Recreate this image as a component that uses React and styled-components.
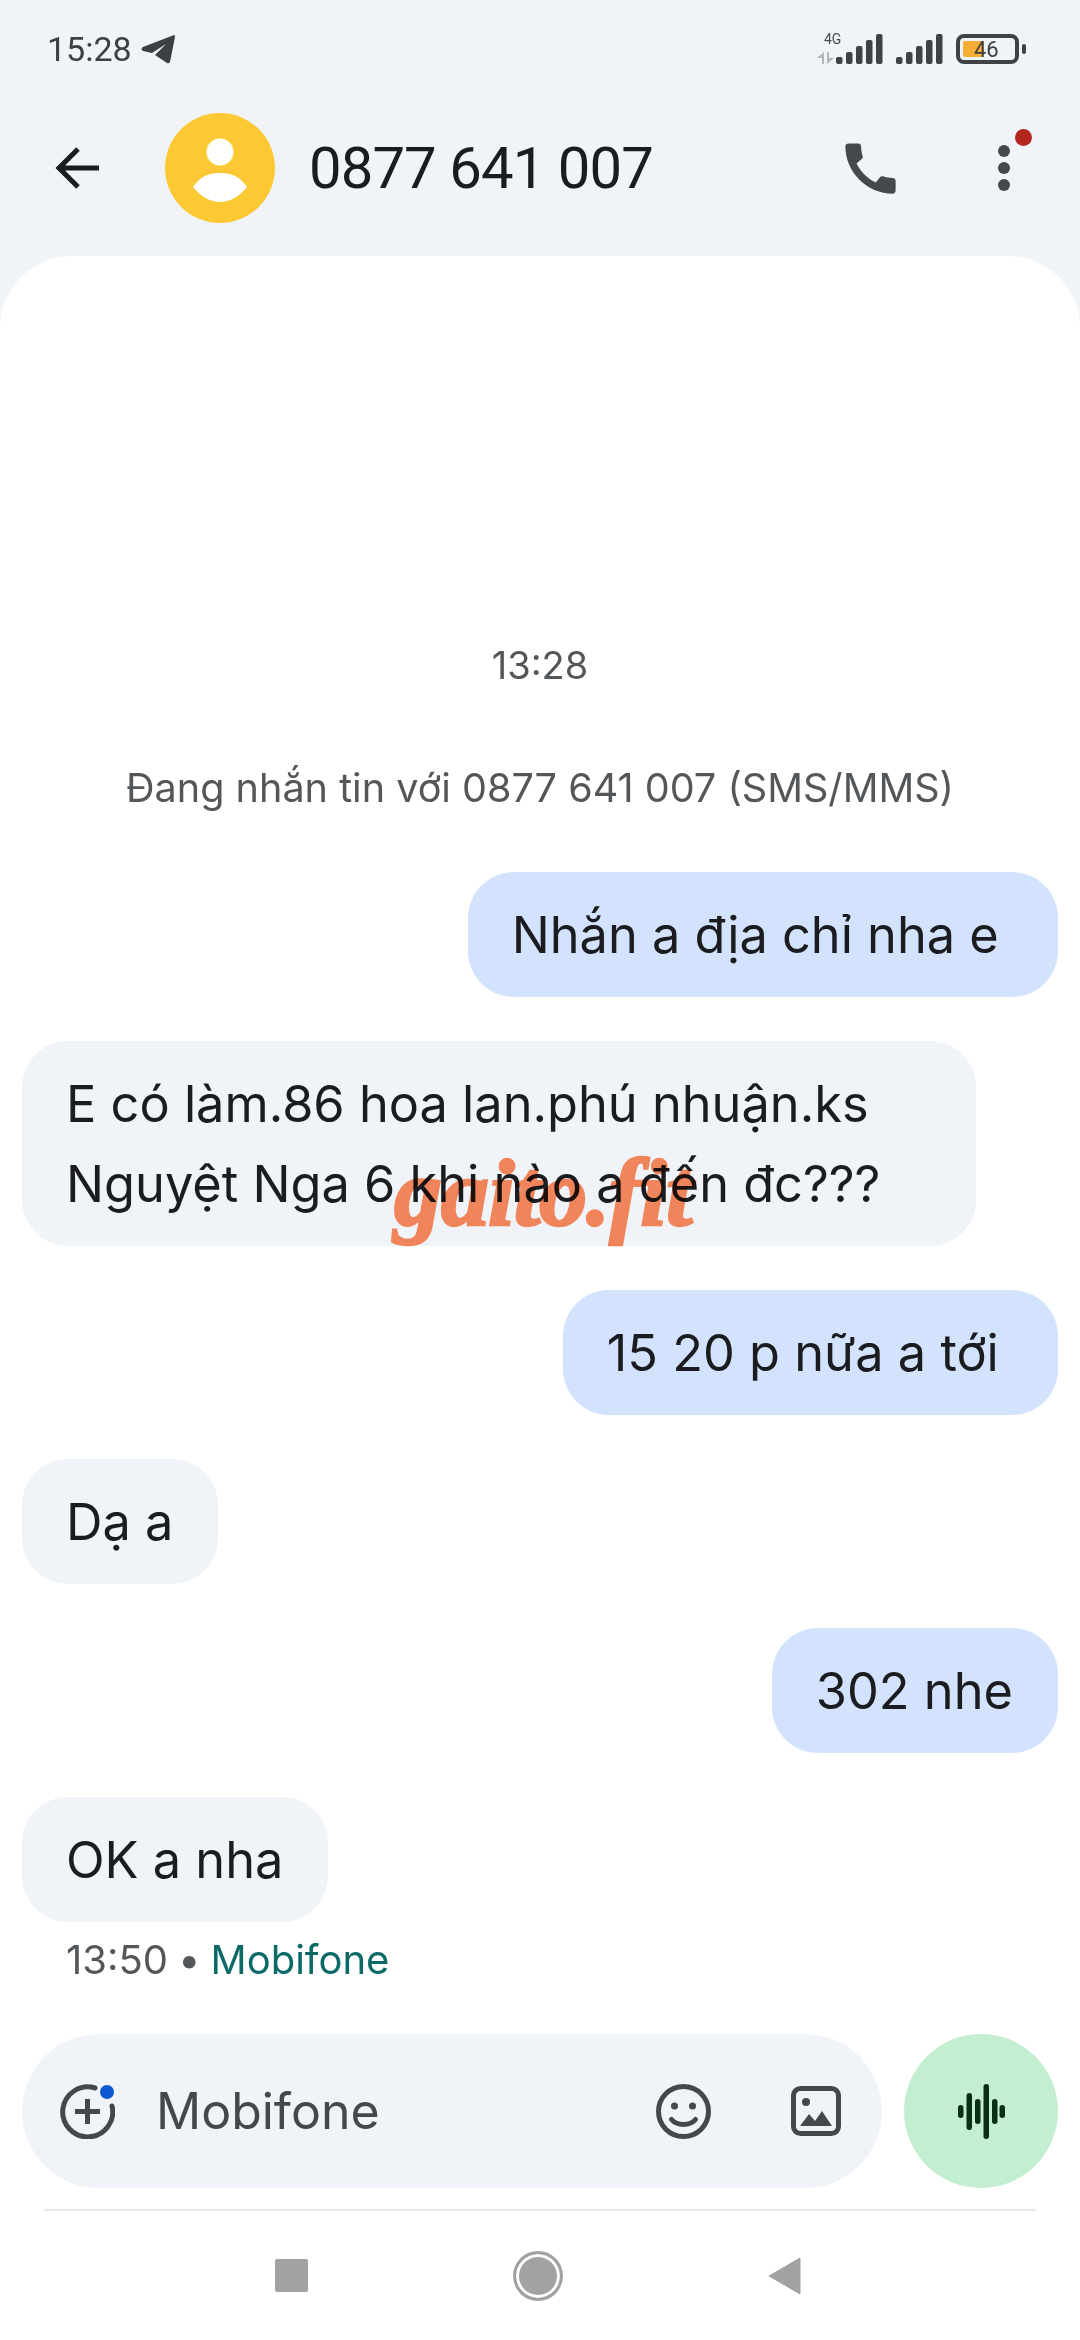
import React from "react";
import styled, { createGlobalStyle } from "styled-components";
import { MdCall } from "react-icons/md";

const GlobalStyle = createGlobalStyle`
  html, body { margin: 0; padding: 0; background: #f0f4f9; }
  * { box-sizing: border-box; }
`;

const Page = styled.div`
  position: relative;
  width: 1080px;
  height: 2340px;
  display: flex;
  flex-direction: column;
  background: #f0f4f9;
  font-family: Inter, "Noto Sans", sans-serif;
  color: #1b1c1f;
  overflow: hidden;
`;

const StatusBar = styled.div`
  height: 98px;
  flex: none;
  padding: 0 55px 0 47px;
  display: flex;
  align-items: center;
  justify-content: space-between;
  font-family: Roboto, sans-serif;
`;

const StatusLeft = styled.div`
  display: flex;
  align-items: center;
  gap: 9px;
  font-size: 34px;
  color: #3c4043;
`;

const StatusRight = styled.div`
  display: flex;
  align-items: center;
  gap: 13px;
`;

const Network = styled.div`
  position: relative;
  width: 66px;
  height: 30px;
  display: flex;
  justify-content: flex-end;
`;

const NetworkLabel = styled.span`
  position: absolute;
  left: 7px;
  top: -3px;
  font-size: 14px;
  color: #4a4d50;
`;

const NetworkArrows = styled.svg`
  position: absolute;
  left: 0;
  bottom: 0;
`;

const Battery = styled.div`
  position: relative;
  width: 63px;
  height: 30px;
  border: 4px solid #3f4245;
  border-radius: 8px;
  margin-right: 6px;
  display: flex;
  align-items: center;
  padding-left: 14px;
  font-size: 22px;
  color: #3c3f42;
  &::before {
    content: "";
    position: absolute;
    left: 3px;
    top: 3px;
    bottom: 3px;
    width: 21px;
    border-radius: 2px;
    background: #f5ad36;
  }
  &::after {
    content: "";
    position: absolute;
    right: -11px;
    top: 6px;
    width: 4px;
    height: 10px;
    border-radius: 2px;
    background: #3f4245;
  }
`;

const BatteryText = styled.span`
  position: relative;
  z-index: 1;
`;

const Header = styled.header`
  height: 140px;
  flex: none;
  margin-bottom: 18px;
  padding: 0 0 0 55px;
  display: flex;
  align-items: center;
`;

const Title = styled.h1`
  flex: 1;
  margin: 0 0 0 34px;
  font-family: Roboto, sans-serif;
  font-size: 58px;
  font-weight: 400;
  letter-spacing: -0.9px;
  color: #1b1c1f;
`;

const Avatar = styled.svg`
  width: 110px;
  height: 110px;
  margin-left: 66px;
  flex: none;
`;

const CallIcon = styled(MdCall)`
  font-size: 67px;
  color: #46494c;
  margin-right: 94px;
`;

const MoreButton = styled.div`
  position: relative;
  width: 12px;
  height: 46px;
  margin-right: 70px;
  display: flex;
  flex-direction: column;
  justify-content: space-between;
  align-items: center;
  &::after {
    content: "";
    position: absolute;
    left: 17px;
    top: -16px;
    width: 17px;
    height: 17px;
    border-radius: 50%;
    background: #b3261e;
  }
`;

const MoreDot = styled.span`
  width: 12px;
  height: 12px;
  border-radius: 50%;
  background: #46494c;
`;

const Sheet = styled.main`
  flex: 1;
  min-height: 0;
  display: flex;
  flex-direction: column;
  background: #fff;
  border-radius: 72px 72px 0 0;
`;

const Thread = styled.div`
  flex: 1;
  min-height: 0;
  display: flex;
  flex-direction: column;
  justify-content: flex-end;
  padding: 0 22px;
`;

const Timestamp = styled.div`
  text-align: center;
  font-size: 38px;
  color: #54575a;
  margin-bottom: 76px;
`;

const Notice = styled.div`
  text-align: center;
  font-size: 39.6px;
  color: #54575a;
  margin-bottom: 60px;
`;

const Bubble = styled.div`
  align-self: ${(p) => (p.$out ? "flex-end" : "flex-start")};
  max-width: 954px;
  background: ${(p) => (p.$out ? "#d3e3fd" : "#f0f4f9")};
  border-radius: 46px;
  padding: 22.5px 45px 22.5px 44px;
  font-size: 50.5px;
  line-height: 80px;
  white-space: pre-wrap;
  color: #1b1c1f;
  & + & {
    margin-top: 44px;
  }
`;

const Meta = styled.div`
  display: flex;
  align-items: center;
  gap: 10px;
  padding-left: 44px;
  margin: 15px 0 51px;
  font-size: 40px;
  line-height: 46px;
  color: #54575a;
`;

const Carrier = styled.span`
  color: #0b6a66;
`;

const ComposerRow = styled.div`
  flex: none;
  display: flex;
  gap: 22px;
  padding: 0 22px;
`;

const Composer = styled.div`
  flex: 1;
  height: 154px;
  display: flex;
  align-items: center;
  padding: 0 41px 0 38px;
  background: #f0f4f9;
  border-radius: 77px;
`;

const ComposerText = styled.span`
  flex: 1;
  margin-left: 41px;
  font-size: 50px;
  color: #45484b;
`;

const ToolIcon = styled.svg`
  width: ${(p) => p.$size || 55}px;
  height: ${(p) => p.$size || 55}px;
  flex: none;
  margin-left: ${(p) => p.$gap || 0}px;
`;

const VoiceButton = styled.div`
  width: 154px;
  height: 154px;
  flex: none;
  border-radius: 50%;
  background: #c4eed0;
  display: flex;
  align-items: center;
  justify-content: center;
`;

const Divider = styled.div`
  flex: none;
  height: 2px;
  margin: 21px 44px 0;
  background: #e6e7e9;
`;

const NavBar = styled.nav`
  flex: none;
  height: 129px;
  padding-right: 4px;
  display: flex;
  align-items: center;
  justify-content: center;
  gap: 205px;
`;

const NavSquare = styled.span`
  width: 33px;
  height: 33px;
  border-radius: 2px;
  background: #a2a2a2;
`;

const NavHome = styled.span`
  width: 50px;
  height: 50px;
  border-radius: 50%;
  background: #a2a2a2;
  border: 3px solid #a2a2a2;
  box-shadow: inset 0 0 0 3px #fff;
`;

const NavBack = styled.svg`
  width: 33px;
  height: 38px;
`;

const Watermark = styled.div`
  position: absolute;
  left: 394px;
  top: 1140px;
  font-family: "Liberation Serif", serif;
  font-size: 96px;
  font-style: italic;
  font-weight: 700;
  letter-spacing: -1px;
  line-height: 1.1;
  color: #ff8a5c;
  -webkit-text-stroke: 2.5px #ff8a5c;
  mix-blend-mode: multiply;
`;

const Bars = () => (
  <svg width="47" height="30" viewBox="0 0 47 30" fill="#3f4245">
    <rect x="0" y="23" width="6.5" height="7" rx="2" />
    <rect x="10" y="18" width="6.5" height="12" rx="2" />
    <rect x="20" y="12" width="6.5" height="18" rx="2" />
    <rect x="30" y="6" width="6.5" height="24" rx="2" />
    <rect x="40" y="0" width="6.5" height="30" rx="2" />
  </svg>
);

export default function App() {
  return (
    <Page>
      <GlobalStyle />
      <StatusBar>
        <StatusLeft>
          15:28
          <svg width="34" height="29" viewBox="0 0 34 29" fill="#3c4043">
            <path d="M33 0 Q34 0 34 2 L29 27 Q28 29 26 28 L14 20 L25 9 L11 18 L2 16 Q-1 14 2 12 Z" />
          </svg>
        </StatusLeft>
        <StatusRight>
          <Network>
            <NetworkLabel>4G</NetworkLabel>
            <NetworkArrows width="17" height="12" viewBox="0 0 17 12" fill="#b4b6b9">
              <path d="M0 6 L7 0 V12 H5 V6 Z" />
              <path d="M17 6 L10 12 V0 H12 V6 Z" />
            </NetworkArrows>
            <Bars />
          </Network>
          <Bars />
          <Battery>
            <BatteryText>46</BatteryText>
          </Battery>
        </StatusRight>
      </StatusBar>

      <Header>
        <svg width="44" height="44" viewBox="0 0 44 44" fill="none" stroke="#1b1c1f" strokeWidth="5">
          <path d="M44 22 H4 M23 3 L4 22 L23 41" />
        </svg>
        <Avatar viewBox="0 0 110 110">
          <circle cx="55" cy="55" r="55" fill="#fcc934" />
          <circle cx="55" cy="39" r="13.5" fill="#fff" />
          <path d="M28 74 C36 62 46 60 55 60 C64 60 74 62 82 74 C74 84 64 89 55 89 C46 89 36 84 28 74 Z" fill="#fff" />
        </Avatar>
        <Title>0877 641 007</Title>
        <CallIcon />
        <MoreButton>
          <MoreDot />
          <MoreDot />
          <MoreDot />
        </MoreButton>
      </Header>

      <Sheet>
        <Thread>
          <Timestamp>13:28</Timestamp>
          <Notice>Đang nhắn tin với 0877 641 007 (SMS/MMS)</Notice>
          <Bubble $out>{"Nhắn a địa chỉ nha e\u00a0"}</Bubble>
          <Bubble>E có làm.86 hoa lan.phú nhuận.ks Nguyệt Nga 6 khi nào a đến đc???</Bubble>
          <Bubble $out>{"15 20 p nữa a tới\u00a0"}</Bubble>
          <Bubble>Dạ a</Bubble>
          <Bubble $out>302 nhe</Bubble>
          <Bubble>OK a nha</Bubble>
          <Meta>
            13:50 <span>•</span> <Carrier>Mobifone</Carrier>
          </Meta>
        </Thread>

        <ComposerRow>
          <Composer>
            <ToolIcon viewBox="0 0 55 55" fill="none" stroke="#45484b" strokeWidth="5">
              <path d="M35 4 A25 25 0 1 0 52 22" strokeLinecap="round" />
              <path d="M27.5 15 V40 M15 27.5 H40" />
              <circle cx="47" cy="8" r="7" fill="#0b57d0" stroke="none" />
            </ToolIcon>
            <ComposerText>Mobifone</ComposerText>
            <ToolIcon viewBox="0 0 55 55" fill="none" stroke="#45484b" strokeWidth="5">
              <circle cx="27.5" cy="27.5" r="25" />
              <circle cx="18.5" cy="22" r="3.5" fill="#45484b" stroke="none" />
              <circle cx="36.5" cy="22" r="3.5" fill="#45484b" stroke="none" />
              <path d="M15.5 35.5 C21 42 34 42 39.5 35.5" strokeLinecap="round" />
            </ToolIcon>
            <ToolIcon $size={50} $gap={80} viewBox="0 0 50 50" fill="none" stroke="#45484b" strokeWidth="5">
              <rect x="2.5" y="2.5" width="45" height="45" rx="7" />
              <circle cx="15" cy="16" r="4" fill="#45484b" stroke="none" />
              <path d="M9 40 L18 28 L24 35 L31 25 L41 40 Z" fill="#45484b" stroke="none" />
            </ToolIcon>
          </Composer>
          <VoiceButton>
            <svg width="47" height="55" viewBox="0 0 47 55" fill="#0a2e12">
              <rect x="0" y="21" width="5.5" height="13" rx="2.7" />
              <rect x="8.5" y="9" width="5.5" height="37" rx="2.7" />
              <rect x="17" y="15" width="5.5" height="25" rx="2.7" />
              <rect x="25.5" y="0" width="5.5" height="55" rx="2.7" />
              <rect x="34" y="15" width="5.5" height="25" rx="2.7" />
              <rect x="41.5" y="21" width="5.5" height="13" rx="2.7" />
            </svg>
          </VoiceButton>
        </ComposerRow>
        <Divider />
        <NavBar>
          <NavSquare />
          <NavHome />
          <NavBack viewBox="0 0 33 38" fill="#a2a2a2">
            <path d="M32 1 V37 L1 19 Z" stroke="#a2a2a2" strokeLinejoin="round" />
          </NavBack>
        </NavBar>
      </Sheet>
      <Watermark>gaito.fit</Watermark>
    </Page>
  );
}
